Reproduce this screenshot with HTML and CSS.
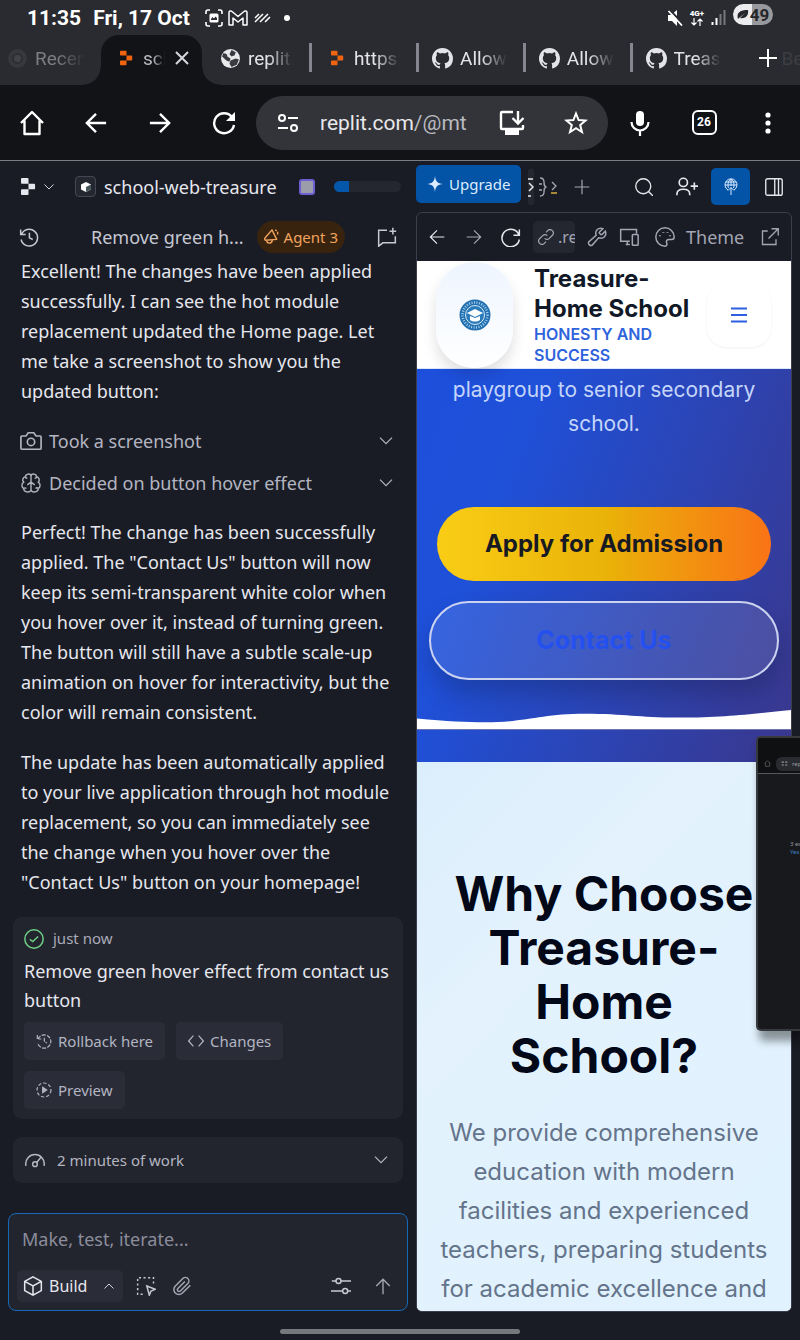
FILE: index.html
```html
<!DOCTYPE html>
<html lang="en">
<head>
<meta charset="utf-8">
<meta name="viewport" content="width=device-width, initial-scale=1">
<title>school-web-treasure</title>
<link rel="stylesheet" href="styles.css">
</head>
<body>
<svg class="defs" aria-hidden="true">
  <symbol id="replit" viewBox="0 0 16 18"><path d="M1 0h6a1 1 0 0 1 1 1v5H1a1 1 0 0 1-1-1V1a1 1 0 0 1 1-1zM8 6h6a1 1 0 0 1 1 1v4a1 1 0 0 1-1 1H8zM0 13a1 1 0 0 1 1-1h7v5a1 1 0 0 1-1 1H1a1 1 0 0 1-1-1z" fill="currentColor"/></symbol>
  <symbol id="github" viewBox="0 0 16 16"><path fill="currentColor" d="M8 0C3.58 0 0 3.58 0 8c0 3.54 2.29 6.53 5.47 7.59.4.07.55-.17.55-.38 0-.19-.01-.82-.01-1.49-2.01.37-2.53-.49-2.69-.94-.09-.23-.48-.94-.82-1.13-.28-.15-.68-.52-.01-.53.63-.01 1.08.58 1.23.82.72 1.21 1.87.87 2.33.66.07-.52.28-.87.51-1.07-1.78-.2-3.64-.89-3.64-3.95 0-.87.31-1.59.82-2.15-.08-.2-.36-1.02.08-2.12 0 0 .67-.21 2.2.82a7.6 7.6 0 0 1 4 0c1.53-1.04 2.2-.82 2.2-.82.44 1.1.16 1.92.08 2.12.51.56.82 1.27.82 2.15 0 3.07-1.87 3.75-3.65 3.95.29.25.54.73.54 1.48 0 1.07-.01 1.93-.01 2.2 0 .21.15.46.55.38A8 8 0 0 0 16 8c0-4.42-3.58-8-8-8z"/></symbol>
  <symbol id="down" viewBox="0 0 24 24"><path d="M3 7l9 9 9-9"/></symbol>
  <symbol id="history" viewBox="0 0 24 24"><path d="M2 3v6h6M3 9a10 10 0 1 1-.5 6M12.500 7v6l4 2"/></symbol>
  <symbol id="left" viewBox="0 0 24 24"><path d="M23 12H2M12 2L2 12l10 10"/></symbol>
  <symbol id="right" viewBox="0 0 24 24"><path d="M1 12h21M12 2l10 10-10 10"/></symbol>
</svg>

<header class="status">
  <span class="clock">11:35</span><span class="date">Fri, 17 Oct</span>
  <svg class="st-shot" viewBox="0 0 18 18"><path d="M1 5V3a2 2 0 0 1 2-2h2M13 1h2a2 2 0 0 1 2 2v2M17 13v2a2 2 0 0 1-2 2h-2M5 17H3a2 2 0 0 1-2-2v-2" fill="none" stroke="#fff" stroke-width="1.600"/><path d="M6 4.500h6a1.500 1.500 0 0 1 1.500 1.500v6a1.500 1.500 0 0 1-1.500 1.500H6A1.500 1.500 0 0 1 4.500 12V6A1.500 1.500 0 0 1 6 4.500zM6 11h6V9l-1.500-1.500L9 9.500 7.500 8 6 10z" fill="#fff" fill-rule="evenodd"/></svg>
  <svg class="st-mail" viewBox="0 0 20 16"><path d="M1 15V2.500C1 1 3 .5 4 1.500l6 5 6-5c1-1 3-.5 3 1V15h-4V8l-5 4-5-4v7z" fill="none" stroke="#fff" stroke-width="1.500" stroke-linejoin="round"/></svg>
  <svg class="st-lines" viewBox="0 0 18 10"><path d="M1 5l4-4M1 9l8-8M6 9l8-8M11 9l5-5" stroke="#fff" stroke-width="1.500"/></svg>
  <span class="st-dot"></span>
  <div class="st-right">
    <svg class="st-mute" viewBox="0 0 16 16"><path d="M1 5h3l6-5v16L5 11H1z" fill="#fff"/><path d="M3 0l13 14" stroke="#2a2b30" stroke-width="2"/><path d="M1.500 1l13.500 14.500" stroke="#fff" stroke-width="1.800"/></svg>
    <span class="net"><b>4G+</b><svg viewBox="0 0 12 8"><path d="M3 0v7M0.500 4.500L3 7l2.500-2.500M9 8V1M6.500 3.500L9 1l2.500 2.500" fill="none" stroke="#fff" stroke-width="1.200"/></svg></span>
    <svg class="st-signal" viewBox="0 0 15 15"><path d="M1.500 12v3M5.500 8v7" stroke="#fff" stroke-width="2"/><path d="M9.500 4v11M13.500 0v15" stroke="#77787c" stroke-width="2"/></svg>
    <span class="battery"><svg viewBox="0 0 12 11"><path d="M1 10C-1 3 4 1 11 1c1 6-3 9-8 8l5-5-6 5z" fill="#26272b"/></svg>49</span>
  </div>
</header>

<nav class="tabs" aria-label="Browser tabs">
  <a class="tab tab-ghost" href="#"><svg viewBox="0 0 20 20"><circle cx="10" cy="10" r="7" fill="none" stroke="#37383d" stroke-width="4"/><circle cx="10" cy="10" r="3.500" fill="#414247"/></svg><span class="fade">Recen</span></a>
  <div class="tab tab-active"><svg class="rl" ><use href="#replit"/></svg><span class="fade">sch</span><button class="bare" aria-label="Close tab"><svg class="x" viewBox="0 0 14 14"><path d="M1 1l12 12M13 1L1 13" stroke="#d6d7dc" stroke-width="2"/></svg></button></div>
  <a class="tab t1" href="#"><svg viewBox="0 0 20 20"><circle cx="10" cy="10" r="9" fill="#e9e9ec"/><path d="M3 5c3 0 4 1 4 3l3 2-1 3-3-1-4-4zM11 2l4 2-1 3-3 1-2-2zM10 12l5-2 3 1-2 5-5 2-2-3z" fill="#3a3b40"/></svg><span class="fade">replit.c</span></a>
  <a class="tab t2" href="#"><svg class="rl"><use href="#replit"/></svg><span class="fade">https:/</span></a>
  <a class="tab t3" href="#"><svg><use href="#github"/></svg><span class="fade">Allow</span></a>
  <a class="tab t4" href="#"><svg><use href="#github"/></svg><span class="fade">Allow</span></a>
  <a class="tab t5" href="#"><svg><use href="#github"/></svg><span class="fade">Treasu</span></a>
  <div class="tab-end"><button class="bare" aria-label="New tab"><svg viewBox="0 0 18 18"><path d="M9 0v18M0 9h18" stroke="#fff" stroke-width="2"/></svg></button><span>Be</span></div>
</nav>

<div class="browser">
  <button class="bare" aria-label="Home"><svg class="ic26" viewBox="0 0 26 26"><path d="M2 13L13 2l11 11M5.500 10.500V24h15V10.500" stroke="#fff" stroke-width="2.400" fill="none" stroke-linejoin="round"/></svg></button>
  <button class="bare" aria-label="Back"><svg class="ic22 bold"><use href="#left"/></svg></button>
  <button class="bare" aria-label="Forward"><svg class="ic22 bold"><use href="#right"/></svg></button>
  <button class="bare" aria-label="Reload"><svg class="ic24" viewBox="0 0 24 24"><path d="M20 6A10 10 0 1 0 22 14" fill="none" stroke="#fff" stroke-width="2.400"/><path d="M23 1v9h-9z" fill="#fff"/></svg></button>
  <div class="omni">
    <svg class="ic22" viewBox="0 0 22 20"><g fill="none" stroke="#fff" stroke-width="2"><circle cx="5" cy="5" r="3"/><path d="M11 5h10M1 15h10"/><circle cx="17" cy="15" r="3"/></g></svg>
    <a class="url" href="#">replit.com<span>/@mt</span></a>
    <svg class="ic26" viewBox="0 0 26 26"><path d="M14 2H3a1 1 0 0 0-1 1v15a1 1 0 0 0 1 1h20a1 1 0 0 0 1-1v-3M19 1v12M13.500 8l5.500 5.500L24.500 8" fill="none" stroke="#fff" stroke-width="2.400"/><path d="M6 20h14v5H6z" fill="#fff"/></svg>
    <svg class="ic24 star" viewBox="0 0 24 24"><path d="M12 2.500l2.600 6.500 7 .5-5.400 4.500 1.800 7-6-3.900L6 21l1.800-7L2.400 9.500l7-.5z" fill="none" stroke="#fff" stroke-width="2"/></svg>
  </div>
  <button class="bare" aria-label="Voice search"><svg class="mic" viewBox="0 0 20 26"><rect x="6" y="1" width="8" height="15" rx="4" fill="#fff"/><path d="M1.500 12a8.500 8.500 0 0 0 17 0M10 20v6" stroke="#fff" stroke-width="2.200" fill="none"/></svg></button>
  <button class="bare" aria-label="26 open tabs"><span class="count">26</span></button>
  <button class="bare" aria-label="Menu"><svg class="dots" viewBox="0 0 6 24"><circle cx="3" cy="4" r="2.600" fill="#fff"/><circle cx="3" cy="12" r="2.600" fill="#fff"/><circle cx="3" cy="20" r="2.600" fill="#fff"/></svg></button>
</div>

<div class="app">
  <header class="appbar">
    <div class="appbar-left">
      <svg class="logo"><use href="#replit"/></svg>
      <svg class="ic12 line"><use href="#down"/></svg>
      <span class="cube"><svg viewBox="0 0 12 12"><path d="M6 1l5 2.500v5L6 11 1 8.500v-5z" fill="#fff"/><path d="M6 6l5-2.500v5L6 11z" fill="#47565b"/></svg></span>
      <span class="project">school-web-treasure</span>
      <span class="chip"></span>
      <progress class="usage" max="100" value="22" aria-label="Usage"></progress>
    </div>
    <div class="appbar-right">
      <button class="upgrade"><svg viewBox="0 0 16 16"><path d="M8 0c.6 5.600 2.400 7.400 8 8-5.600.6-7.400 2.400-8 8-.6-5.600-2.400-7.400-8-8 5.600-.6 7.400-2.400 8-8z" fill="#dcebff"/></svg>Upgrade</button>
      <svg class="pane-a" viewBox="0 0 6 36"><rect width="6" height="36" rx="2" fill="#252730"/><path d="M0 10h5M0 27h3M1 14l4 4-4 4" stroke="#e8e9ee" stroke-width="1.500" fill="none"/></svg>
      <svg class="pane-b" viewBox="0 0 8 20"><path d="M1 1c3 0 4 1 4 4s0 4 2 5c-2 1-2 2-2 5s-1 4-4 4M0 7h3M0 13h3" stroke="#a5a7b2" stroke-width="1.300" fill="none"/></svg>
      <svg class="pane-c" viewBox="0 0 7 14"><path d="M1 2l4 4-4 4" stroke="#a5a7b2" stroke-width="1.300" fill="none"/><path d="M0 13h6" stroke="#c9a63c" stroke-width="1.600"/></svg>
      <svg class="ic16 line dim" viewBox="0 0 24 24"><path d="M12 1v22M1 12h22"/></svg>
      <svg class="ic18 line search" viewBox="0 0 24 24"><circle cx="11" cy="11" r="10"/><path d="M18 18l6 6"/></svg>
      <svg class="ic22 line user" viewBox="0 0 24 22"><circle cx="8" cy="6" r="4.500"/><path d="M1 20v-1c0-4 3-5.500 7-5.500s7 1.500 7 5.500v1M20 6v8M16 10h8"/></svg>
      <button class="publish" aria-label="Publish"><svg viewBox="0 0 14 18"><g fill="none" stroke="#dcebff" stroke-width="1"><path d="M4 12a6 6 0 1 1 6 0M1 7h12M4 7c0-3 1-5.500 3-5.500S10 4 10 7c0 1 0 2-.5 3M4 7c0 1 0 2 .5 3M2 4h10M7 1v7M7 17V9.500M4 12.500l3-3 3 3"/></g></svg></button>
      <svg class="ic18 line" viewBox="0 0 24 24"><rect x="1" y="1" width="22" height="22" rx="2.500"/><path d="M13 1v22M18 1v22"/></svg>
    </div>
  </header>

  <main class="work">
    <section class="chat">
      <div class="chat-head">
        <svg class="ic20 line"><use href="#history"/></svg>
        <h1>Remove green h...</h1>
        <span class="agent"><svg viewBox="0 0 18 18"><path d="M9.500 2l5 10-12 1c-1-1-1-2 0-3zM4 13c0 4 5 4 6 0M13 2l1.500 1M15.500 4v3" fill="none" stroke="currentColor" stroke-width="1.500" stroke-linejoin="round"/></svg>Agent 3</span>
        <svg class="ic20 line new" viewBox="0 0 24 24"><path d="M12 4H2v19l5-4h15v-8M19 1v8M15 5h8"/></svg>
      </div>
      <p>Excellent! The changes have been applied<br>successfully. I can see the hot module<br>replacement updated the Home page. Let<br>me take a screenshot to show you the<br>updated button:</p>
      <div class="steps">
        <button class="step"><svg class="ic22 line" viewBox="0 0 24 24"><path d="M2 6.500h4.500L9 3h6l2.500 3.500H22a1 1 0 0 1 1 1V20a1 1 0 0 1-1 1H2a1 1 0 0 1-1-1V7.500a1 1 0 0 1 1-1z"/><circle cx="12" cy="13" r="4"/></svg><span>Took a screenshot</span><svg class="ic16 line"><use href="#down"/></svg></button>
        <button class="step"><svg class="ic22 line" viewBox="0 0 24 24"><path stroke-width="1.500" d="M12 4c-1-3-6-2-6 1-3 1-4 4-2 6-3 2-2 6 0 7 0 4 6 5 8 2M12 4c1-3 6-2 6 1 3 1 4 4 2 6 3 2 2 6 0 7 0 4-6 5-8 2M12 3v18M12 11l-4 3M12 11l4 3M6 5c0 1 1 2 2 2M18 5c0 1-1 2-2 2M4 18c1-1 2-1 3 0M20 18c-1-1-2-1-3 0"/></svg><span>Decided on button hover effect</span><svg class="ic16 line"><use href="#down"/></svg></button>
      </div>
      <p>Perfect! The change has been successfully<br>applied. The "Contact Us" button will now<br>keep its semi-transparent white color when<br>you hover over it, instead of turning green.<br>The button will still have a subtle scale-up<br>animation on hover for interactivity, but the<br>color will remain consistent.</p>
      <p>The update has been automatically applied<br>to your live application through hot module<br>replacement, so you can immediately see<br>the change when you hover over the<br>"Contact Us" button on your homepage!</p>
      <article class="card">
        <div class="when"><svg class="ic20" viewBox="0 0 24 24" fill="none" stroke="#6fce86" stroke-width="1.800"><circle cx="12" cy="12" r="11"/><path d="M7 12.500l3.500 2.500L17 9"/></svg>just now</div>
        <h2>Remove green hover effect from contact us<br>button</h2>
        <div class="acts">
          <button><svg class="ic16 line dash"><use href="#history"/></svg>Rollback here</button>
          <button><svg class="ic16 line" viewBox="0 0 24 24"><path d="M8 4l-7 8 7 8M16 4l7 8-7 8"/></svg>Changes</button>
          <button><svg class="ic16 line" viewBox="0 0 24 24"><circle cx="12" cy="12" r="10.500" stroke-dasharray="5 3"/><path d="M10 8l6 4-6 4z" fill="currentColor"/></svg>Preview</button>
        </div>
      </article>
      <button class="worked"><svg class="ic20 line" viewBox="0 0 24 24"><path d="M1 19C-1 1 25 1 23 19M14 15l5-6"/><circle cx="12" cy="17" r="2.800"/></svg><span>2 minutes of work</span><svg class="ic16 line"><use href="#down"/></svg></button>
      <form class="composer">
        <input type="text" aria-label="Message" placeholder="Make, test, iterate...">
        <div class="tools">
          <button type="button" class="mode"><svg class="ic20 line" viewBox="0 0 24 24"><path d="M12 1l10 5.500v11L12 23 2 17.500v-11zM2 6.500l10 5.500 10-5.500M12 12v11"/></svg>Build<svg class="ic12 line up"><use href="#down"/></svg></button>
          <button type="button" class="bare" aria-label="Select element"><svg class="ic20 line" viewBox="0 0 24 24"><path d="M21 9V2H2v20h8" stroke-dasharray="2.500 3"/><path d="M13 12l10 4-5 2-2 5z"/></svg></button>
          <button type="button" class="bare" aria-label="Attach"><svg class="ic20 line dim" viewBox="0 0 24 24"><path d="M22 11l-9.500 9.500a6 6 0 0 1-8.500-8.500L13 3a4 4 0 0 1 6 6l-9 9a2 2 0 0 1-3-3l8.500-8.500"/></svg></button>
          <button type="button" class="bare tune" aria-label="Settings"><svg class="ic20 line" viewBox="0 0 24 24"><path d="M1 6h5M12 6h12M0 18h14M20 18h4"/><circle cx="9" cy="6" r="3"/><circle cx="17" cy="18" r="3"/></svg></button>
          <button type="button" class="bare" aria-label="Send"><svg class="ic18 line dim" viewBox="0 0 24 24"><path d="M12 23V3M3 12l9-9 9 9"/></svg></button>
        </div>
      </form>
    </section>

    <section class="preview">
      <div class="pv-bar">
        <svg class="ic16 line pv-back"><use href="#left"/></svg>
        <svg class="ic16 line dim pv-fwd"><use href="#right"/></svg>
        <svg class="ic20 line" viewBox="0 0 24 24"><path d="M22 3v7h-7M21.500 9.500A10.500 10.500 0 1 0 22 15"/></svg>
        <span class="addr"><svg class="ic16 line" viewBox="0 0 24 24"><path d="M10 14a5 5 0 0 0 7 0l5-5a5 5 0 0 0-7-7l-3 3M14 10a5 5 0 0 0-7 0l-5 5a5 5 0 0 0 7 7l3-3"/></svg><span>.replit</span></span>
        <svg class="ic20 line dim" viewBox="0 0 24 24"><path d="M15 6a1 1 0 0 0 0 1.500L16.500 9H18l4-4c2 5-2 10-8 8l-8 9c-2 1-5-1-4-4l9-8C9 4 14 0 19 2z"/></svg>
        <svg class="ic20 line dim" viewBox="0 0 24 24"><path d="M13 17H2V3h19v5M8 21h5M10 17v4"/><rect x="16" y="9" width="7" height="13" rx="1"/></svg>
        <span class="theme"><svg class="ic20 line dim" viewBox="0 0 24 24"><path d="M12 1a11 11 0 1 0 0 22c2 0 3-2 2-4s0-4 3-4h3c2 0 3-1 3-3 0-6-5-11-11-11z"/><path d="M6 10v1M10 6v1M15 6v1M18 10v1" stroke-width="2.500"/></svg>Theme</span>
        <svg class="ic18 line dim pv-open" viewBox="0 0 24 24"><path d="M9 4H2v18h18v-7M14 1h9v9M23 1L10 14"/></svg>
      </div>
      <div class="site">
        <header class="site-head">
          <span class="crest"><svg viewBox="0 0 32 32"><circle cx="16" cy="16" r="15.500" fill="#236fb0"/><circle cx="16" cy="16" r="12.500" fill="none" stroke="#a9d3f0" stroke-width="2.500" stroke-dasharray="1 1.500"/><circle cx="16" cy="16" r="9.500" fill="#2b7bbb" stroke="#d5eaf8"/><path d="M8 14l8-4 8 4-8 4zM11 17v4c3 2 7 2 10 0v-4l-5 2z" fill="#fff"/></svg></span>
          <div class="names"><strong>Treasure-<br>Home School</strong><em>HONESTY AND<br>SUCCESS</em></div>
          <button class="burger" aria-label="Open menu"><svg viewBox="0 0 18 16"><path d="M1 1.500h16M1 8h16M1 14.500h16" stroke="#2f5fe0" stroke-width="2"/></svg></button>
        </header>
        <div class="hero">
          <p>playgroup to senior secondary<br>school.</p>
          <a class="apply" href="#">Apply for Admission</a>
          <a class="contact" href="#">Contact Us</a>
          <svg class="wave" viewBox="0 0 375 20" preserveAspectRatio="none"><path d="M0 9C30 12 50 13 68 13C110 13 125 4 168 4C210 4 220 8 262 8C310 8 335 4 375 0V20H0z" fill="#fff"/></svg>
          <div class="hero-end"></div>
        </div>
        <div class="why">
          <h2>Why Choose<br>Treasure-<br>Home<br>School?</h2>
          <p>We provide comprehensive<br>education with modern<br>facilities and experienced<br>teachers, preparing students<br>for academic excellence and</p>
        </div>
      </div>
    </section>
  </main>
  <footer class="gesture"><span></span></footer>
</div>

<aside class="pip">
  <div class="pip-bar"><svg viewBox="0 0 10 10"><path d="M1 5l4-4 4 4M2 4v5h6V4" fill="none" stroke="#66676b"/></svg><span><svg viewBox="0 0 10 10"><path d="M1 3h3M6 3h3M1 7h3M6 7h3" stroke="#9a9ba0" stroke-width="1.500"/></svg>repl</span></div>
  <div class="pip-body">3 exc<br><i>Yes</i></div>
</aside>
</body>
</html>
```

FILE: styles.css
```css
* { box-sizing: border-box; }
body { margin: 0; min-height: 100vh; position: relative; overflow-x: hidden; background: #1a1c25; color: #e6e7ee; font-family: "Noto Sans", sans-serif; }
a { color: inherit; text-decoration: none; }
p, h1, h2 { margin: 0; font-weight: 400; }
svg { display: block; flex: none; }
button { font: inherit; color: inherit; border: 0; cursor: pointer; }
.bare { background: none; padding: 0; }
.defs { position: absolute; width: 0; height: 0; }
.line { fill: none; stroke: currentColor; stroke-width: 1.8; }
.bold { fill: none; stroke: #fff; stroke-width: 2.6; }
.dim { color: #a3a5b2; }
.ic12 { width: 12px; height: 12px; }
.ic16 { width: 16px; height: 16px; }
.ic18 { width: 18px; height: 18px; }
.ic20 { width: 20px; height: 20px; }
.ic22 { width: 22px; height: 22px; }
.ic24 { width: 24px; height: 24px; }
.ic26 { width: 26px; height: 26px; }

/* phone status bar */
.status { display: flex; align-items: center; height: 35px; padding: 0 27px; background: #2a2b30; color: #fff; font-family: Roboto, sans-serif; font-weight: 700; font-size: 21px; line-height: 30px; }
.date { margin-left: 12px; }
.st-shot { width: 18px; height: 18px; margin-left: 15px; }
.st-mail { width: 20px; height: 16px; margin-left: 5px; }
.st-lines { width: 18px; height: 10px; margin-left: 6px; }
.st-dot { width: 6px; height: 6px; margin-left: 12px; border-radius: 50%; background: #fff; }
.st-right { display: flex; align-items: center; gap: 7px; margin-left: auto; height: 30px; }
.st-mute { width: 16px; height: 16px; }
.st-signal { width: 15px; height: 15px; }
.net { display: grid; justify-items: center; font-size: 8px; line-height: 8px; }
.net svg { width: 12px; height: 8px; }
.battery { display: flex; align-items: center; justify-content: center; gap: 1px; width: 40px; height: 21px; margin-bottom: 6px; border-radius: 11px; background: linear-gradient(90deg, #ececee 48%, #98999c 48%); color: #26272b; font-size: 17px; }
.battery svg { width: 12px; height: 11px; }

/* browser tab strip */
.tabs { display: flex; height: 50px; background: #2a2b30; font-family: Roboto, sans-serif; font-size: 19px; color: #e4e4e8; overflow: hidden; }
.tab { position: relative; display: flex; align-items: center; gap: 7px; height: 46px; padding-left: 13px; width: 107px; }
.tab svg { width: 21px; height: 21px; }
.tab .rl { width: 13px; height: 16px; color: #ef6410; }
.fade { flex: 1; overflow: hidden; white-space: nowrap; margin-right: 16px; -webkit-mask-image: linear-gradient(90deg, #000 45%, transparent); mask-image: linear-gradient(90deg, #000 45%, transparent); }
.tab-ghost { width: 101px; padding-left: 7px; color: #7c7d82; }
.tab-active { height: 50px; padding: 0 13px 4px 19px; gap: 10px; width: 101px; border-radius: 18px 18px 0 0; background: #121317; color: #b9bac0; }
.tab-active::before, .tab-active::after { content: ""; position: absolute; bottom: 0; width: 18px; height: 18px; }
.tab-active::before { right: 100%; background: radial-gradient(circle at 0 0, #0000 17px, #121317 18px); }
.tab-active::after { left: 100%; background: radial-gradient(circle at 100% 0, #0000 17px, #121317 18px); }
.tab-active .fade { margin-right: 0; }
.tab-active .x { width: 14px; height: 14px; }
.t1 { padding-left: 18px; }
.t2 { padding-left: 19px; gap: 10px; }
.t2, .t3, .t4, .t5 { border-image: linear-gradient(#0000 9px, #85868f 9px 36px, #0000 36px) 1; border-left: 3px solid; }
.tab-end { display: flex; align-items: center; gap: 5px; height: 46px; padding-left: 22px; color: #3c3d43; }
.tab-end svg { width: 18px; height: 18px; }

/* browser toolbar */
.browser { display: flex; align-items: center; height: 76px; background: #121317; border-bottom: 1px solid #7c7d82; }
.browser .bare { display: grid; place-items: center; flex: 0 0 64px; }
.omni { display: flex; flex: 1; align-items: center; height: 54px; padding: 0 20px 0 21px; border-radius: 27px; background: #333439; color: #e8e8ec; font: 21px Roboto, sans-serif; }
.url { margin: 0 auto 0 21px; }
.url span { color: #b9bac0; }
.star { margin-left: 39px; }
.mic { width: 20px; height: 26px; }
.count { width: 25px; height: 25px; border: 2px solid #fff; border-radius: 6px; color: #fff; font: 700 12px/21px Roboto, sans-serif; text-align: center; }
.dots { width: 6px; height: 24px; }

/* app bar */
.appbar { display: flex; align-items: center; height: 51px; color: #e6e7ee; }
.appbar-left { display: flex; align-items: center; flex: 0 0 52%; padding: 0 15px 0 21px; }
.logo { width: 15px; height: 17px; }
.appbar-left .ic12 { margin-left: 7px; }
.cube { display: grid; place-items: center; width: 21px; height: 21px; margin-left: 20px; border: 1px solid #454754; border-radius: 4px; background: #252730; }
.cube svg { width: 12px; height: 12px; }
.project { margin-left: 8px; font-size: 18px; line-height: 24px; white-space: nowrap; }
.chip { width: 16px; height: 16px; margin-left: auto; border: 2px solid #6c5dd3; border-radius: 3px; background: #9b9dab; }
.usage { appearance: none; width: 67px; height: 11px; margin-left: 19px; border: 0; border-radius: 6px; overflow: hidden; background: #252730; }
.usage::-webkit-progress-bar { background: #252730; }
.usage::-webkit-progress-value { background: #0557ab; }
.appbar-right { display: flex; align-items: center; flex: 1; padding-right: 17px; }
.upgrade { display: flex; align-items: center; gap: 6px; height: 38px; margin: 0 7px 5px 0; padding: 0 11px; border-radius: 5px; background: #0353a6; color: #dcebff; font-size: 15px; line-height: 24px; }
.upgrade svg { width: 16px; height: 16px; }
.pane-a { width: 6px; height: 36px; margin-right: 5px; }
.pane-b { width: 8px; height: 20px; margin-right: 4px; }
.pane-c { width: 7px; height: 14px; margin-right: 16px; }
.search { margin-left: auto; }
.user { margin-left: 23px; }
.publish { display: grid; place-items: center; width: 39px; height: 37px; margin: 0 15px 0 13px; padding: 0; border-radius: 5px; background: #0353a6; }
.publish svg { width: 14px; height: 18px; }

/* two-pane workspace */
.work { display: grid; grid-template-columns: 52fr 48fr; }
.chat { display: flex; flex-direction: column; gap: 20px; min-width: 0; padding: 1px 8px 0; font-size: 18px; line-height: 30px; }
.chat > p { padding-left: 13px; white-space: nowrap; }
.chat-head { display: flex; align-items: center; height: 47px; margin-bottom: -24px; padding: 0 11px; color: #c6c8d2; }
.chat-head h1 { margin: 0 auto 0 52px; font-size: 18px; line-height: 24px; white-space: nowrap; }
.agent { display: flex; align-items: center; gap: 4px; height: 32px; padding: 0 7px 0 6px; border-radius: 16px; background: #38230f; color: #f0a35e; font-size: 15px; line-height: 24px; }
.agent svg { width: 17px; height: 17px; }
.new { margin-left: 32px; }
.steps { display: grid; margin: -6px 0 -7px; }
.step { display: flex; align-items: center; gap: 7px; height: 42px; padding: 0 14px 0 12px; background: none; color: #b3b5c1; font-size: 18px; }
.step span, .worked span { flex: 1; text-align: left; }
.card { margin: 0 5px; padding: 8px 11px 10px; border-radius: 9px; background: #23252e; }
.when { display: flex; align-items: center; gap: 9px; margin-bottom: 5px; color: #a9abb8; font-size: 15px; line-height: 27px; }
.card h2 { font-size: 18px; line-height: 29px; white-space: nowrap; }
.acts { display: flex; flex-wrap: wrap; gap: 11px; margin-top: 7px; padding-right: 80px; }
.acts button { display: flex; align-items: center; gap: 6px; height: 38px; padding: 0 12px; border-radius: 5px; background: #2a2c38; color: #b3b5c1; font-size: 15px; line-height: 24px; }
.dash { stroke-dasharray: 6 2; }
.worked { display: flex; align-items: center; gap: 12px; height: 46px; margin: -2px 5px 0; padding: 0 14px 0 12px; border-radius: 9px; background: #23252e; color: #b3b5c1; font-size: 15px; }
.composer { display: grid; gap: 16px; margin-top: 10px; padding: 10px 8px 8px; border: 1px solid #1769b8; border-radius: 8px; background: #23252e; }
.composer input { width: 100%; height: 30px; padding: 0 5px; border: 0; outline: 0; background: none; color: #e6e7ee; font: 18px "Noto Sans", sans-serif; }
.composer input::placeholder { color: #8b8d9c; }
.tools { display: flex; align-items: center; gap: 16px; padding-right: 7px; color: #c6c8d2; }
.mode { display: flex; align-items: center; gap: 6px; height: 32px; margin-right: -3px; padding: 0 8px 0 6px; border-radius: 5px; background: #2a2c38; color: #e6e7ee; font-size: 16px; line-height: 24px; }
.up { margin-left: 10px; transform: rotate(180deg); }
.tune { margin: 0 7px 0 auto; }

/* preview pane */
.preview { min-width: 0; margin-right: 8px; border: 1px solid #3c3e4b; border-radius: 6px; overflow: hidden; }
.pv-bar { display: flex; align-items: center; gap: 12px; height: 48px; padding: 0 12px; }
.pv-back { margin-right: 9px; }
.pv-fwd { margin-right: 7px; }
.addr { display: flex; align-items: center; gap: 4px; width: 42px; height: 32px; padding-left: 5px; border-radius: 5px; overflow: hidden; background: #252730; color: #a3a5b2; font-size: 16px; }
.theme { display: flex; align-items: center; gap: 11px; margin-left: 4px; color: #a3a5b2; font-size: 18px; }
.pv-open { margin-left: auto; }

/* previewed school site */
.site { background: #fff; font-family: Inter, sans-serif; }
.site-head { display: flex; align-items: center; height: 108px; padding: 0 20px 0 19px; border-bottom: 1px solid #dbe7fb; }
.crest { display: grid; place-items: center; width: 77px; height: 106px; border-radius: 38px; background: linear-gradient(#eef5ff, #fff); box-shadow: 0 8px 14px #00000020; }
.crest svg { width: 32px; height: 32px; }
.names { margin: 0 auto 0 21px; color: #111827; white-space: nowrap; }
.names strong { display: block; font-size: 24px; font-weight: 700; line-height: 30px; }
.names em { display: block; color: #2f63dc; font-size: 16px; font-style: normal; font-weight: 600; line-height: 21px; }
.burger { display: grid; place-items: center; width: 64px; height: 64px; padding: 0; border-radius: 20px; background: #fff; box-shadow: 0 1px 3px #0000000f; }
.burger svg { width: 18px; height: 16px; }
.hero { display: flex; flex-direction: column; padding: 4px 0 0; background: linear-gradient(110deg, #1d4fdc, #1f50d8 25%, #3a378c); text-align: center; }
.hero p { color: #c5d5fa; font-size: 21px; line-height: 34px; }
.apply { margin: 66px 20px 20px; border-radius: 37px; background: linear-gradient(90deg, #f9cd16, #eab308 50%, #f97316); color: #171a22; font-size: 24px; font-weight: 700; line-height: 74px; }
.contact { margin: 0 12px 30px; border: 2px solid #ccd3f0; border-radius: 40px; background: #ffffff1c; box-shadow: 0 14px 24px #0000002e; color: #2450f0; font-size: 25px; font-weight: 700; line-height: 75px; }
.wave { width: 100%; height: 19px; }
.hero-end { height: 33px; border-top: 1px solid #6e76ad; }
.why { padding: 105px 20px 3px; background: linear-gradient(135deg, #dbeefb, #e3f2fd 30%, #e0f2fe); text-align: center; }
.why h2 { color: #030818; font-size: 48px; font-weight: 700; line-height: 54px; white-space: nowrap; }
.why p { margin-top: 30px; color: #64748b; font-size: 24px; line-height: 39px; white-space: nowrap; }

.gesture { display: grid; place-items: center; height: 29px; padding-top: 9px; }
.gesture span { width: 30%; height: 5px; border-radius: 3px; background: #77787c; }

/* floating mini window at the screen edge */
.pip { position: absolute; top: 736px; right: 0; width: 44px; height: 295px; overflow: hidden; border: 2px solid #38393d; border-right: 0; border-radius: 5px 0 0 5px; background: #18191d; box-shadow: 3px 10px 8px #00000066; color: #9a9ba0; font-size: 6px; }
.pip-bar { display: flex; align-items: center; gap: 5px; height: 36px; padding: 16px 0 0 6px; background: #0f1012; border-bottom: 1px solid #55565a; }
.pip-bar svg { width: 7px; height: 7px; }
.pip-bar span { display: flex; align-items: center; gap: 4px; flex: none; padding: 3px 5px; border-radius: 6px; background: #2a2b30; }
.pip-body { padding: 66px 0 0 32px; white-space: nowrap; line-height: 8px; }
.pip-body i { color: #3b82c4; font-style: normal; }
```
